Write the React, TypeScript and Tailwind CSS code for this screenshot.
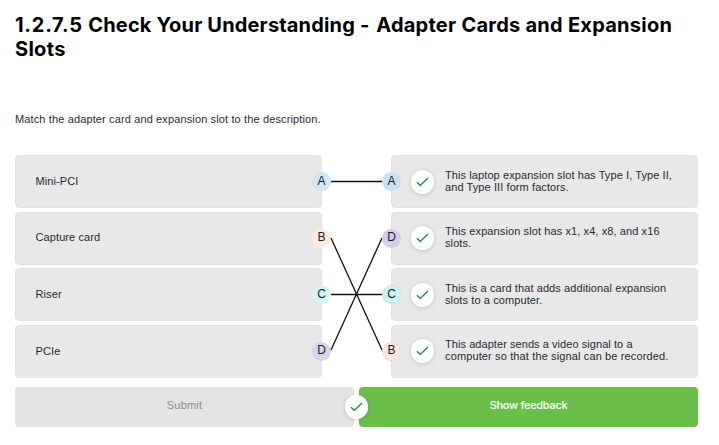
import React from "react";

type Choice = { label: string; letter: string; tint: string };
type Answer = {
  lines: { text: string; spacing: string }[];
  letter: string;
  tint: string;
  lift: string;
};

const choices: Choice[] = [
  { label: "Mini-PCI", letter: "A", tint: "bg-[#d0e6fa]" },
  { label: "Capture card", letter: "B", tint: "bg-[#faebe0]" },
  { label: "Riser", letter: "C", tint: "bg-[#d5f5f5]" },
  { label: "PCIe", letter: "D", tint: "bg-[#d8d2ec]" },
];

const answers: Answer[] = [
  {
    letter: "A",
    tint: "bg-[#c8e1f9]",
    lift: "mt-px",
    lines: [
      { text: "This laptop expansion slot has Type I, Type II,", spacing: "tracking-[0.09px]" },
      { text: "and Type III form factors.", spacing: "tracking-[0.09px]" },
    ],
  },
  {
    letter: "D",
    tint: "bg-[#d5cbea]",
    lift: "-mt-px",
    lines: [
      { text: "This expansion slot has x1, x4, x8, and x16", spacing: "tracking-[0.1px]" },
      { text: "slots.", spacing: "tracking-[0.1px]" },
    ],
  },
  {
    letter: "C",
    tint: "bg-[#ccf3f4] border border-dashed border-[#c9d6e0]",
    lift: "mt-px",
    lines: [
      { text: "This is a card that adds additional expansion", spacing: "tracking-[0.09px]" },
      { text: "slots to a computer.", spacing: "tracking-[0.1px]" },
    ],
  },
  {
    letter: "B",
    tint: "bg-[#fae8dc] border border-dashed border-[#d2d4de]",
    lift: "-mt-px",
    lines: [
      { text: "This adapter sends a video signal to a", spacing: "tracking-[0.06px]" },
      { text: "computer so that the signal can be recorded.", spacing: "tracking-[0.13px]" },
    ],
  },
];

function Letter({ children, tint, side }: { children: string; tint: string; side: string }) {
  return (
    <span
      className={`absolute top-4 flex h-[19px] w-[19px] items-center justify-center rounded-full text-[12px] leading-none text-[#1d1d22] ${side} ${tint}`}
    >
      <span className="relative -top-px">{children}</span>
    </span>
  );
}

function Check({ className }: { className: string }) {
  return (
    <span
      className={`flex h-6 w-[23px] items-center justify-center rounded-full bg-white shadow-[0_1px_4px_rgba(0,0,0,0.16)] ${className}`}
    >
      <svg width="13" height="10" viewBox="0 0 13 10" fill="none">
        <path d="M1 5.2 4.3 8.4 12 1" stroke="#168a35" strokeWidth="1.35" />
      </svg>
    </span>
  );
}

const card = "relative flex h-[53px] items-center rounded border border-[#dfe2e8] bg-[#e8e8e8]";

export default function App() {
  return (
    <main className="h-[445px] w-[719px] overflow-hidden bg-white pl-[15px] pt-[13px] font-['Liberation_Sans',Arial,sans-serif] text-[11px] text-[#2a2a32]">
      <h1 className="h-[99px] font-['Inter',sans-serif] text-[20px] font-bold leading-6 tracking-[0.16px] text-black">
        <span className="block whitespace-nowrap">
          <span className="tracking-[0.75px]">1.2.7.5 </span>
          <span>Check Your Understanding </span>
          <span className="tracking-[1.1px]">- </span>
          <span className="tracking-[0.25px]">Adapter Cards and Expansion</span>
        </span>
        <span className="block tracking-[0.3px]">Slots</span>
      </h1>
      <p className="h-[43px] leading-[14px] tracking-[0.13px]">Match the adapter card and expansion slot to the description.</p>

      <section className="relative flex w-[683px] justify-between">
        <div className="flex h-[223px] w-[307px] flex-col justify-between">
          {choices.map((c) => (
            <div key={c.letter} className={card}>
              <span className="pb-px pl-[19.5px] tracking-[0.1px]">{c.label}</span>
              <Letter tint={c.tint} side="-right-[10px]">{c.letter}</Letter>
            </div>
          ))}
        </div>
        <svg className="absolute left-[307px] top-0" width="69" height="223" stroke="#111" strokeWidth="1.3">
          <path d="M9 26.5H60M9 139.5H60M9 83 60 195M60 83 9 195" />
        </svg>
        <div className="flex h-[223px] w-[307px] flex-col justify-between">
          {answers.map((a) => (
            <div key={a.letter} className={card}>
              <Letter tint={a.tint} side="-left-[10px]">{a.letter}</Letter>
              <Check className={`ml-[19px] ${a.lift}`} />
              <div className="ml-[11px] whitespace-nowrap pb-0.5 leading-3">
                {a.lines.map((l) => (
                  <div key={l.text}>
                    <span className={l.spacing}>{l.text}</span>
                  </div>
                ))}
              </div>
            </div>
          ))}
        </div>
      </section>

      <div className="relative mt-[9px] flex h-10 w-[683px] gap-[5px]">
        <button className="w-[339px] rounded bg-[#e4e4e4] pb-1 text-[#8b8b8b] tracking-[0.2px]">Submit</button>
        <button className="w-[339px] rounded bg-[#6abf4b] pb-1 font-['Inter',sans-serif] font-medium tracking-[-0.3px] text-white">Show feedback</button>
        <Check className="absolute left-[330px] top-2" />
      </div>
    </main>
  );
}
